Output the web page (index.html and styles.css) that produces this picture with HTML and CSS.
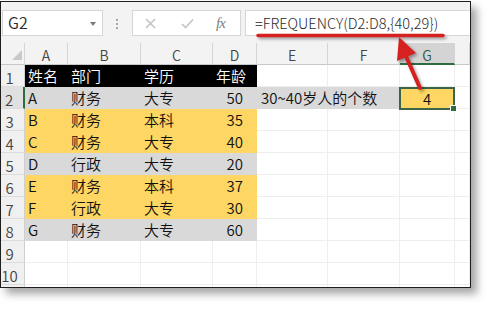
FILE: index.html
```html
<!DOCTYPE html>
<html lang="zh-CN">
<head>
    <meta charset="UTF-8">
    <meta name="viewport" content="width=device-width, initial-scale=1.0">
    <title>FREQUENCY 函数</title>
    <link rel="stylesheet" href="styles.css">
</head>
<body>

    <div class="shot">
        <div class="frame">
            <div class="formula-bar">
                <div class="name-box">G2<span class="drop"></span></div>
                <div class="grip"><i></i><i></i><i></i></div>
                <div class="fx-buttons">
                    <svg class="btn-x" width="11" height="11" viewBox="0 0 11 11"><path d="M1 1L10 10M10 1L1 10"/></svg>
                    <svg class="btn-ok" width="13" height="11" viewBox="0 0 13 11"><path d="M1 6L4.5 9.5L12 1.5"/></svg>
                    <span class="fx">fx</span>
                </div>
                <div class="formula">=FREQUENCY(D2:D8,{40,29})</div>
            </div>

            <div class="sheet">
                <div class="row head">
                    <div class="corner"><span></span></div>
                    <div>A</div><div>B</div><div>C</div><div>D</div>
                    <div>E</div><div>F</div><div class="sel">G</div><div></div>
                </div>
                <div class="row">
                    <div class="num">1</div>
                    <div class="dark">姓名</div><div class="dark">部门</div><div class="dark">学历</div><div class="dark">年龄</div>
                    <div></div><div></div><div></div><div></div>
                </div>
                <div class="row">
                    <div class="num sel">2</div>
                    <div class="gray">A</div><div class="gray">财务</div><div class="gray">大专</div><div class="gray age">50</div>
                    <div class="gray span2">30~40岁人的个数</div>
                    <div class="gold active">4</div><div></div>
                </div>
                <div class="row">
                    <div class="num">3</div>
                    <div class="gold">B</div><div class="gold">财务</div><div class="gold">本科</div><div class="gold age">35</div>
                    <div></div><div></div><div></div><div></div>
                </div>
                <div class="row">
                    <div class="num">4</div>
                    <div class="gold">C</div><div class="gold">财务</div><div class="gold">大专</div><div class="gold age">40</div>
                    <div></div><div></div><div></div><div></div>
                </div>
                <div class="row">
                    <div class="num">5</div>
                    <div class="gray">D</div><div class="gray">行政</div><div class="gray">大专</div><div class="gray age">20</div>
                    <div></div><div></div><div></div><div></div>
                </div>
                <div class="row">
                    <div class="num">6</div>
                    <div class="gold">E</div><div class="gold">财务</div><div class="gold">本科</div><div class="gold age">37</div>
                    <div></div><div></div><div></div><div></div>
                </div>
                <div class="row">
                    <div class="num">7</div>
                    <div class="gold">F</div><div class="gold">行政</div><div class="gold">大专</div><div class="gold age">30</div>
                    <div></div><div></div><div></div><div></div>
                </div>
                <div class="row">
                    <div class="num">8</div>
                    <div class="gray">G</div><div class="gray">财务</div><div class="gray">大专</div><div class="gray age">60</div>
                    <div></div><div></div><div></div><div></div>
                </div>
                <div class="row">
                    <div class="num">9</div>
                    <div></div><div></div><div></div><div></div>
                    <div></div><div></div><div></div><div></div>
                </div>
                <div class="row">
                    <div class="num">10</div>
                    <div></div><div></div><div></div><div></div>
                    <div></div><div></div><div></div><div></div>
                </div>
                <div class="row">
                    <div class="num"></div>
                    <div></div><div></div><div></div><div></div>
                    <div></div><div></div><div></div><div></div>
                </div>
            </div>
        </div>

        <!-- red pen marks drawn over the screenshot -->
        <svg class="marks" width="492" height="309" viewBox="0 0 492 309">
            <line class="pen" x1="258" y1="35.5" x2="443" y2="35.5"/>
            <line class="pen arrow" x1="420" y1="88" x2="405" y2="54"/>
            <polygon class="head" points="399,37 416,53 397,61"/>
        </svg>
    </div>

</body>
</html>
```

FILE: styles.css
```css
* {
    margin: 0;
    padding: 0;
    box-sizing: border-box;
}
body {
    background: #fff;
    font-family: 'Noto Sans CJK SC', sans-serif;
    color: #111;
}
.shot {
    position: relative;
    width: 492px;
    height: 309px;
    padding-top: 1px;
}
.frame {
    width: 471px;
    height: 287px;
    border: 1px solid #1e1e1e;
    overflow: hidden;
    background: #f3f3f3;
    box-shadow: 6px 6px 8px rgba(0, 0, 0, 0.35);
}

/* formula bar */
.formula-bar {
    display: flex;
    align-items: flex-start;
    height: 41px;
    padding-top: 8px;
}
.name-box, .fx-buttons, .formula {
    height: 26px;
    background: #fff;
    border: 1px solid #d6d6d6;
}
.name-box {
    position: relative;
    width: 101px;
    margin-left: 1px;
    padding-left: 5px;
    font-size: 16px;
    font-weight: 350;
    line-height: 23px;
    color: #2a2a2a;
}
.drop {
    position: absolute;
    right: 6px;
    top: 11px;
    border-left: 3.5px solid transparent;
    border-right: 3.5px solid transparent;
    border-top: 4px solid #7a7a7a;
}
.grip {
    display: flex;
    flex-direction: column;
    gap: 2px;
    margin: 9px 0 0 13px;
}
.grip i {
    width: 2px;
    height: 2px;
    background: #a8a8a8;
}
.fx-buttons {
    display: flex;
    align-items: center;
    width: 109px;
    margin-left: 14px;
    padding-left: 12px;
}
.fx-buttons svg path {
    fill: none;
    stroke: #c4c4c4;
    stroke-width: 1.6;
}
.btn-ok {
    margin-left: 25px;
}
.fx {
    margin-left: 22px;
    font-family: 'Liberation Serif', serif;
    font-style: italic;
    font-size: 15px;
    color: #7d7d7d;
    letter-spacing: -1px;
}
.formula {
    flex: 1;
    margin-left: 4px;
    border-right: none;
    padding-left: 9px;
    font-size: 14.5px;
    font-weight: 300;
    line-height: 24px;
    color: #2a2a2a;
    white-space: nowrap;
}

/* grid */
.row {
    display: grid;
    grid-template-columns: 24px 43px 73px 72px 44px 71px 72px 55px 15px;
    height: 22px;
    background: #fff;
}
.row > div {
    padding: 0 3px;
    font-size: 15px;
    font-weight: 350;
    line-height: 22px;
    white-space: nowrap;
    overflow: hidden;
    border-right: 1px solid #eeeeee;
    border-bottom: 1px solid #eeeeee;
}
.row.head {
    background: #f3f3f3;
}
.row.head > div {
    text-align: center;
    font-size: 14px;
    line-height: 24px;
    color: #444;
    border-right: 1px solid #d4d4d4;
    border-bottom: 1px solid #c8c8c8;
}
.row.head > .sel {
    background: #d4d4d4;
    color: #2c5a3a;
    border-bottom: 2px solid #2f6b41;
}
.corner {
    position: relative;
}
.corner span {
    position: absolute;
    right: 2px;
    bottom: 4px;
    border-left: 10px solid transparent;
    border-bottom: 10px solid #c9c9c9;
}
.row > .num {
    background: #f0f0f0;
    color: #444;
    text-align: center;
    padding: 0 6px 0 0;
    line-height: 25px;
    border-right: 1px solid #cfcfcf;
    border-bottom: 1px solid #dcdcdc;
}
.row > .num.sel {
    background: #e0e0e0;
    border-right: 2px solid #2f6b41;
}
.row > .dark {
    background: #000;
    color: #fff;
    border-color: #000;
}
.row > .gray {
    background: #d9d9d9;
    border-color: #d9d9d9;
}
.row > .gold {
    background: #fdd663;
    border-color: #fdd663;
}
.row > .age {
    text-align: right;
    padding-right: 13px;
}
.row > .span2 {
    grid-column: span 2;
    padding-left: 4px;
}
.row > .active {
    position: relative;
    overflow: visible;
    text-align: center;
    line-height: 19px;
    border: 2px solid #3c6446;
    margin: 0 0 -1px -1px;
}
.active::after {
    content: '';
    position: absolute;
    right: -4px;
    bottom: -4px;
    width: 5px;
    height: 5px;
    background: #2f6b41;
    border: 1px solid #fff;
}

/* annotations */
.marks {
    position: absolute;
    left: 0;
    top: 0;
    filter: drop-shadow(2px 2px 1.5px rgba(0, 0, 0, 0.35));
}
.pen {
    stroke: #d5211f;
    stroke-width: 3.5;
    stroke-linecap: round;
}
.arrow {
    stroke-width: 4;
}
.head {
    fill: #d5211f;
}
```
